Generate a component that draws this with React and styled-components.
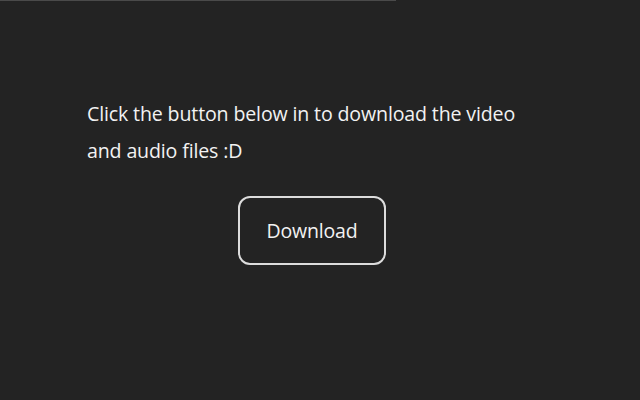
import React from "react";
import styled, { createGlobalStyle } from "styled-components";

const Global = createGlobalStyle`
  html, body { margin: 0; padding: 0; background: #232323; }
  body { font-family: "Open Sans", "Noto Sans", sans-serif; color: #f2f2f2; }
`;

const Page = styled.div`
  width: 640px;
  height: 400px;
  background: #232323;
  display: flex;
  flex-direction: column;
`;

const TopLine = styled.div`
  width: 396px;
  height: 1px;
  background: #4a4a4a;
`;

const Content = styled.main`
  width: 450px;
  padding: 94px 0 0 87px;
  display: flex;
  flex-direction: column;
  align-items: center;
`;

const Message = styled.p`
  margin: 0;
  align-self: stretch;
  font-size: 19.6px;
  line-height: 37px;
  letter-spacing: -0.15px;
`;

const Button = styled.button`
  margin-top: 27px;
  width: 148px;
  height: 69px;
  border: 2px solid #dcdcdc;
  border-radius: 12px;
  background: transparent;
  color: #f2f2f2;
  font-family: inherit;
  font-size: 19.5px;
  letter-spacing: -0.2px;
  cursor: pointer;
`;

export default function App() {
  return (
    <Page>
      <Global />
      <TopLine />
      <Content>
        <Message>Click the button below in to download the video and audio files :D</Message>
        <Button>Download</Button>
      </Content>
    </Page>
  );
}
